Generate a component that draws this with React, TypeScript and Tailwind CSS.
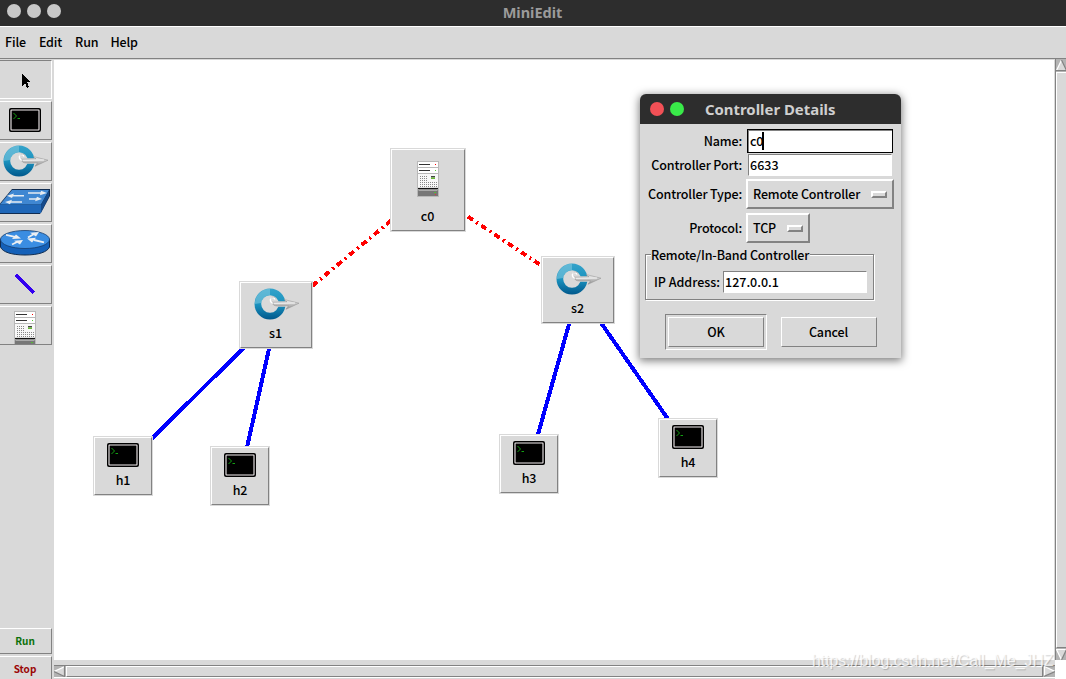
import React from "react";

type IconProps = { className?: string };

const TerminalIcon = ({ className }: IconProps) => (
  <svg width="32" height="24" viewBox="0 0 32 24" className={className}>
    <rect width="32" height="24" rx="2" fill="#000" />
    <rect x="2" y="2" width="28" height="20" rx=".5" fill="#000" stroke="#f4eef0" strokeWidth="1.1" />
    <path d="M4.5 5l3 3l-3 3M8.500 10.500h2.500" fill="none" stroke="#12a012" />
  </svg>
);

const SwitchIcon = ({ className }: IconProps) => (
  <svg width="46" height="32" viewBox="0 0 46 32" className={className}>
    <defs>
      <linearGradient id="ring" x1="0" y1="0" x2="0" y2="1">
        <stop offset="0" stopColor="#35a3ca" />
        <stop offset="0.5" stopColor="#1b93bf" />
        <stop offset="1" stopColor="#00588c" />
      </linearGradient>
      <linearGradient id="arrow" x1="0" y1="0" x2="0" y2="1">
        <stop offset="0" stopColor="#f2f2f2" />
        <stop offset="1" stopColor="#8f8f8f" />
      </linearGradient>
    </defs>
    <path
      fillRule="evenodd"
      d="M16 .5a15.500 15.500 0 1 0 0 31a15.500 15.500 0 1 0 0-31zM16 7.200a8.800 8.800 0 1 1 0 17.600a8.800 8.800 0 1 1 0-17.600z"
      fill="url(#ring)"
    />
    <path d="M.8 16A15.200 15.200 0 0 1 16 .8v6.400A8.800 8.800 0 0 0 7.200 15z" fill="#8ed0e4" opacity="0.5" />
    <path d="M23 13.300h9v5.400h-8.500z" fill="#d9d9d9" />
    <path
      d="M19.500 14.200L33 13.800l-3-2.300L45 15.200L32 21.300l2.500-3.600l-11 .3c-3 0-5.500-1.500-5.500-4z"
      fill="url(#arrow)"
      stroke="#8f8f8f"
      strokeWidth="0.5"
    />
    <path d="M21 11.500c-.5-2-3-2.500-4.200-1c-1 1.600-.3 4 2 4.800" fill="none" stroke="#fff" strokeWidth="1.400" />
    <path d="M22 10.500c-1-2-4-2-5 0" fill="none" stroke="#999" strokeWidth=".6" />
    <path d="M20 15.300l21-.3" fill="none" stroke="#fff" strokeWidth=".8" />
  </svg>
);

const LegacySwitchIcon = () => (
  <svg width="50" height="26" viewBox="0 0 50 26">
    <path d="M0 14.500L12 0h38v7l-7 13-3 5H0z" fill="#102c50" />
    <path d="M0 15.500L12 1h37L41 15.500z" fill="#3f87d2" />
    <path d="M0 15.500h41V24H0z" fill="#1f67b8" />
    <path d="M41 15.500L49 1.500v6L41 24z" fill="#154a8a" />
    <g stroke="#e6ecf2" strokeWidth="1.600" fill="none">
      <path d="M28 4h14M24 6.800H12M39 10H29M22 13H10" />
    </g>
    <g fill="#e6ecf2">
      <path d="M41 1.800L47 4l-7 2.200z" />
      <path d="M14 4.600L7 6.800l5 2.200z" />
      <path d="M37 7.800L42 10l-7 2.200z" />
      <path d="M12 10.800L5 13l5 2.200z" />
    </g>
  </svg>
);

const RouterIcon = () => (
  <svg width="50" height="26" viewBox="0 0 50 26">
    <path d="M.5 9v8c2 5 11 8 24.500 8s22.500-3 24.500-8V9z" fill="#1460b8" stroke="#102c50" />
    <ellipse cx="25" cy="9.5" rx="24.5" ry="9" fill="#3a8de2" stroke="#173d6e" strokeWidth=".8" />
    <g stroke="#eceff2" strokeWidth="1.800" fill="none">
      <path d="M6 4.800l10 2.400M28 7.500l6-3.500M44 12.300l-10-2.300M12 14.500l6-3" />
    </g>
    <g fill="#eceff2">
      <path d="M16 4.500l5 4-9 .5z" />
      <path d="M30 2.800l9-.8-3 4.500z" />
      <path d="M36 7.800l-9 .7 5 4z" />
      <path d="M14 10.800l9-.8-3 4.500z" />
    </g>
  </svg>
);

const ServerIcon = ({ className }: IconProps) => (
  <svg width="22" height="36" viewBox="0 0 22 36" className={className}>
    <rect width="22" height="36" fill="#b8b8b8" />
    <rect x="1" y="1" width="20" height="5" fill="#fff" />
    <rect x="1" y="7" width="20" height="5" fill="#fff" />
    <rect x="1" y="13" width="20" height="14" fill="#f8f8f8" />
    <path d="M2 3.5h11M2 9.5h11" stroke="#333" strokeWidth="1.2" />
    <rect x="18" y="3" width="1" height="1" fill="#f00" />
    <rect x="18" y="9" width="1" height="1" fill="#5c3" />
    <path
      d="M3 15.5h8M3 17.5h8M3 19.5h8M3 21.5h17M3 23.5h17M3 25.5h17"
      stroke="#888"
      strokeDasharray="1 1"
    />
    <rect x="14" y="15" width="4" height="1.5" fill="#444" />
    <rect x="14" y="16.5" width="4" height="1.5" fill="#6b3" />
    <path d="M1 27.5h20" stroke="#111" strokeWidth="1.2" />
    <path d="M1 30l1-1.5h18l1 1.5v5H1z" fill="#777" />
    <path d="M2 29.5h18" stroke="#aaa" />
    <rect x="17" y="31" width="2" height="1" fill="#5b3" />
    <rect x="18" y="33" width="1" height="1" fill="#e33" />
  </svg>
);

const raised = "border border-t-white border-l-white border-b-[#828282] border-r-[#828282]";
const sunken = "border border-t-[#828282] border-l-[#828282] border-b-white border-r-white";

const tools = [
  {
    name: "select",
    icon: (
      <svg width="8" height="15" viewBox="0 0 8 15" className="mt-1 ml-px" shapeRendering="crispEdges">
        <path d="M0 0l8 8H5l2 5-2 1-2-5-3 3z" fill="#000" />
      </svg>
    ),
  },
  { name: "host", icon: <TerminalIcon /> },
  { name: "switch", icon: <SwitchIcon className="ml-px shrink-0" /> },
  { name: "legacy-switch", icon: <LegacySwitchIcon /> },
  { name: "legacy-router", icon: <RouterIcon /> },
  {
    name: "link",
    icon: (
      <svg width="22" height="22" viewBox="0 0 22 22" shapeRendering="crispEdges">
        <path d="M2 2l18 18" stroke="#3300f0" strokeWidth="4" />
      </svg>
    ),
  },
  { name: "controller", icon: <ServerIcon className="mt-2 shrink-0" /> },
];

const nodes = [
  { name: "c0", kind: "controller", place: "left-[390px] top-[148px] w-[76px] h-[84px] pt-[13px]" },
  { name: "s1", kind: "switch", place: "left-[239px] top-[281px] w-[74px] h-[68px] pt-[7px]" },
  { name: "s2", kind: "switch", place: "left-[541px] top-[256px] w-[74px] h-[68px] pt-[7px]" },
  { name: "h1", kind: "host", place: "left-[93px] top-[436px] w-[60px] h-[60px] pt-[7px]" },
  { name: "h2", kind: "host", place: "left-[210px] top-[446px] w-[60px] h-[60px] pt-[7px]" },
  { name: "h3", kind: "host", place: "left-[499px] top-[434px] w-[60px] h-[60px] pt-[7px]" },
  { name: "h4", kind: "host", place: "left-[658px] top-[418px] w-[60px] h-[60px] pt-[7px]" },
];

const links = [
  [276.5, 315.5, 123.5, 466.5],
  [276.5, 315.5, 240.5, 476.5],
  [578.5, 290.5, 529.5, 464.5],
  [578.5, 290.5, 688.5, 448.5],
];

const controlLinks = [
  [428, 190, 276.5, 315.5],
  [428, 190, 578, 290],
];

const Topology = () => (
  <>
    <svg
      className="absolute left-0 top-0"
      width="1054"
      height="660"
      viewBox="0 0 1054 660"
      shapeRendering="crispEdges"
    >
      {links.map(([x1, y1, x2, y2]) => (
        <line key={`${x1}-${x2}`} x1={x1} y1={y1} x2={x2} y2={y2} stroke="#00f" strokeWidth="4" />
      ))}
      {controlLinks.map(([x1, y1, x2, y2]) => (
        <line
          key={`${x1}-${x2}`}
          x1={x1}
          y1={y1}
          x2={x2}
          y2={y2}
          stroke="#f00"
          strokeWidth="4"
          strokeDasharray="6 4 2 4"
        />
      ))}
    </svg>
    {nodes.map(({ name, kind, place }) => (
      <div
        key={name}
        className={`absolute flex flex-col items-center bg-[#d9d9d9] ${place}`}
      >
        <div className={`absolute inset-px ${raised}`} />
        {kind === "controller" && <ServerIcon />}
        {kind === "switch" && <SwitchIcon className="ml-[2px]" />}
        {kind === "host" && <TerminalIcon />}
        <span className={`leading-5 ${kind === "controller" ? "mt-[9px] mr-px" : kind === "switch" ? "mt-[3px] mr-px" : "mt-[3px]"}`}>
          {name}
        </span>
      </div>
    ))}
  </>
);

const Field = ({ label, className, children }: { label: string; className: string; children: React.ReactNode }) => (
  <div className={`flex items-center ${className}`}>
    <span className="w-[102px] text-right whitespace-nowrap">{label}</span>
    {children}
  </div>
);

const OptionMenu = ({ value, className }: { value: string; className: string }) => (
  <div
    className={`ml-1 flex h-[30px] items-center justify-between border-2 border-t-white border-l-white border-b-[#828282] border-r-[#828282] pr-[5px] pl-[5px] ${className}`}
  >
    <span>{value}</span>
    <span className="h-[7px] w-4 border-2 border-t-white border-l-white border-b-[#828282] border-r-[#828282]" />
  </div>
);

const ControllerDialog = () => (
  <div className="absolute left-[640px] top-[94px] flex h-[264px] w-[261px] flex-col rounded-t-md bg-[#d9d9d9] shadow-[0_2px_9px_1px_rgba(0,0,0,0.5)]">
    <div className="flex h-[30px] items-center gap-[6px] rounded-t-md bg-[#2d2d2d] pl-[10px]">
      <span className="size-[14px] rounded-full bg-[#f25056]" />
      <span className="size-[14px] rounded-full bg-[#39ea49]" />
      <span className="ml-[15px] font-['Noto_Sans'] text-[14.9px] font-bold tracking-normal whitespace-nowrap text-[#cfcfcf]">
        Controller Details
      </span>
    </div>
    <Field label="Name:" className="mt-[5px] h-6">
      <div className="ml-[5px] flex h-6 w-[146px] items-center border border-black bg-white pl-[2px] shadow-[inset_1px_1px_0_#828282]">
        c0
        <span className="-ml-px h-[18px] w-[2px] bg-black" />
      </div>
    </Field>
    <Field label="Controller Port:" className="mt-px h-[22px]">
      <div className={`ml-[6px] flex h-[22px] w-[144px] items-center bg-white pl-px tracking-normal ${sunken}`}>6633</div>
    </Field>
    <Field label="Controller Type:" className="mt-[3px] h-[30px]">
      <OptionMenu value="Remote Controller" className="w-[148px]" />
    </Field>
    <Field label="Protocol:" className="mt-1 h-[30px]">
      <OptionMenu value="TCP" className="w-16" />
    </Field>
    <div className="mt-[11px] ml-[5px] h-[46px] w-[229px] border border-[#828282] shadow-[inset_1px_1px_0_#fff,1px_1px_0_#fff]">
      <div className="-mt-[9px] ml-[5px] h-[18px] w-[159px] bg-[#d9d9d9] leading-[18px] whitespace-nowrap">
        Remote/In-Band Controller
      </div>
      <div className="mt-[7px] flex h-[22px] items-center">
        <span className="w-[74px] text-right tracking-normal whitespace-nowrap">IP Address:</span>
        <div className={`ml-[3px] flex h-[22px] w-[144px] items-center bg-white pl-px tracking-normal ${sunken}`}>
          127.0.0.1
        </div>
      </div>
    </div>
    <div className="mt-[14px] ml-[25px] flex items-center">
      <div className={`flex h-9 w-[102px] items-center pl-[2px] ${sunken}`}>
        <button className={`h-[30px] w-[96px] ${raised}`}>OK</button>
      </div>
      <button className={`ml-[14px] h-[30px] w-24 pr-px ${raised}`}>Cancel</button>
    </div>
  </div>
);

const Arrow = ({ d, light, dark }: { d: string; light: string; dark: string }) => (
  <svg width="11" height="11" viewBox="0 0 11 11" className="shrink-0 bg-[#b3b3b3]">
    <path d={d} fill="#d9d9d9" />
    <path d={light} fill="none" stroke="#fff" strokeWidth="1.2" />
    <path d={dark} fill="none" stroke="#828282" strokeWidth="1.2" />
  </svg>
);

const App = () => {
  return (
    <div className="relative flex h-[679px] w-[1066px] flex-col overflow-hidden bg-[#d9d9d9] font-['Noto_Sans_CJK_SC','Noto_Sans',sans-serif] text-[12.5px] leading-5 font-medium tracking-[-0.15px] text-black">
      <header className="flex h-[26px] shrink-0 items-center bg-[#2d2d2d]">
        <div className="flex w-[61px] gap-[6px] pb-1 pl-[7px]">
          <span className="size-[14px] rounded-full bg-[#c8c8c8]" />
          <span className="size-[14px] rounded-full bg-[#c8c8c8]" />
          <span className="size-[14px] rounded-full bg-[#c8c8c8]" />
        </div>
        <h1 className="mr-[62px] flex-1 pb-[3px] text-center font-['Noto_Sans'] text-[14.5px] font-bold tracking-normal text-[#9b9b9b]">
          MiniEdit
        </h1>
      </header>
      <nav className="flex h-[33px] shrink-0 items-center gap-[13px] border-t border-b border-t-white border-b-[#828282] pb-px pl-[5px]">
        <span>File</span>
        <span>Edit</span>
        <span>Run</span>
        <span className="-ml-px">Help</span>
      </nav>
      <div className="flex min-h-0 flex-1">
        <aside className="flex w-[54px] shrink-0 flex-col pt-px">
          <div className="flex flex-col gap-[2px]">
            {tools.map(({ name, icon }) => (
              <div
                key={name}
                className={`flex h-[39px] w-[52px] items-center justify-center overflow-hidden border-l-0 pr-px pb-px ${
                  name === "select" ? sunken : raised
                }`}
              >
                {icon}
              </div>
            ))}
          </div>
          <div className="mt-auto -mb-[3px] flex flex-col gap-[2px] text-[10px] font-bold tracking-normal">
            <button className={`h-[26px] w-[52px] border-l-0 pr-px text-[#0b700b] ${raised}`}>Run</button>
            <button className={`h-[26px] w-[52px] border-l-0 pr-px text-[#9b0808] ${raised}`}>Stop</button>
          </div>
        </aside>
        <div className="flex min-w-0 flex-1 flex-col">
          <div className="flex h-[601px]">
            <main className="w-[1001px] shrink-0 border-t border-r border-t-[#d9d9d9] border-r-[#d9d9d9] bg-white" />
            <div className="flex min-w-0 flex-1 flex-col border-l border-l-[#828282] bg-[#b3b3b3] pt-px">
              <Arrow d="M5.5 0L11 11H0z" light="M5.5 0L.5 10.5" dark="M5.5 0L10.5 10.5H0" />
              <div className={`my-px -mr-px flex-1 bg-[#d9d9d9] ${raised}`} />
              <Arrow d="M0 0h11L5.5 11z" light="M11 .5H.5L5.5 11" dark="M5.5 11L10.5 .5" />
            </div>
          </div>
          <div className="flex flex-1">
            <div className="flex w-[1001px] flex-col bg-[#d9d9d9] pt-[5px]">
              <div className="flex h-[13px] border-t border-b border-t-[#828282] border-b-white bg-[#b3b3b3]">
                <Arrow d="M11 0v11L0 5.5z" light="M11 .5L0 5.5" dark="M0 5.5L10.5 10.5V0" />
                <div className={`mx-px flex-1 bg-[#d9d9d9] ${raised}`} />
                <Arrow d="M0 0v11l11-5.500z" light="M.5 11V.5L11 5.500" dark="M11 5.500L0 10.5" />
              </div>
            </div>
            <div className="flex-1 bg-white" />
          </div>
        </div>
      </div>
      <Topology />
      <ControllerDialog />
      <span className="absolute top-[651px] left-[812px] font-['Liberation_Sans'] text-[15.8px] font-normal tracking-normal whitespace-nowrap text-white/80 [text-shadow:1px_1px_1px_rgba(0,0,0,0.2)]">
        https://blog.csdn.net/Call_Me_JHZ
      </span>
    </div>
  );
};

export default App;
